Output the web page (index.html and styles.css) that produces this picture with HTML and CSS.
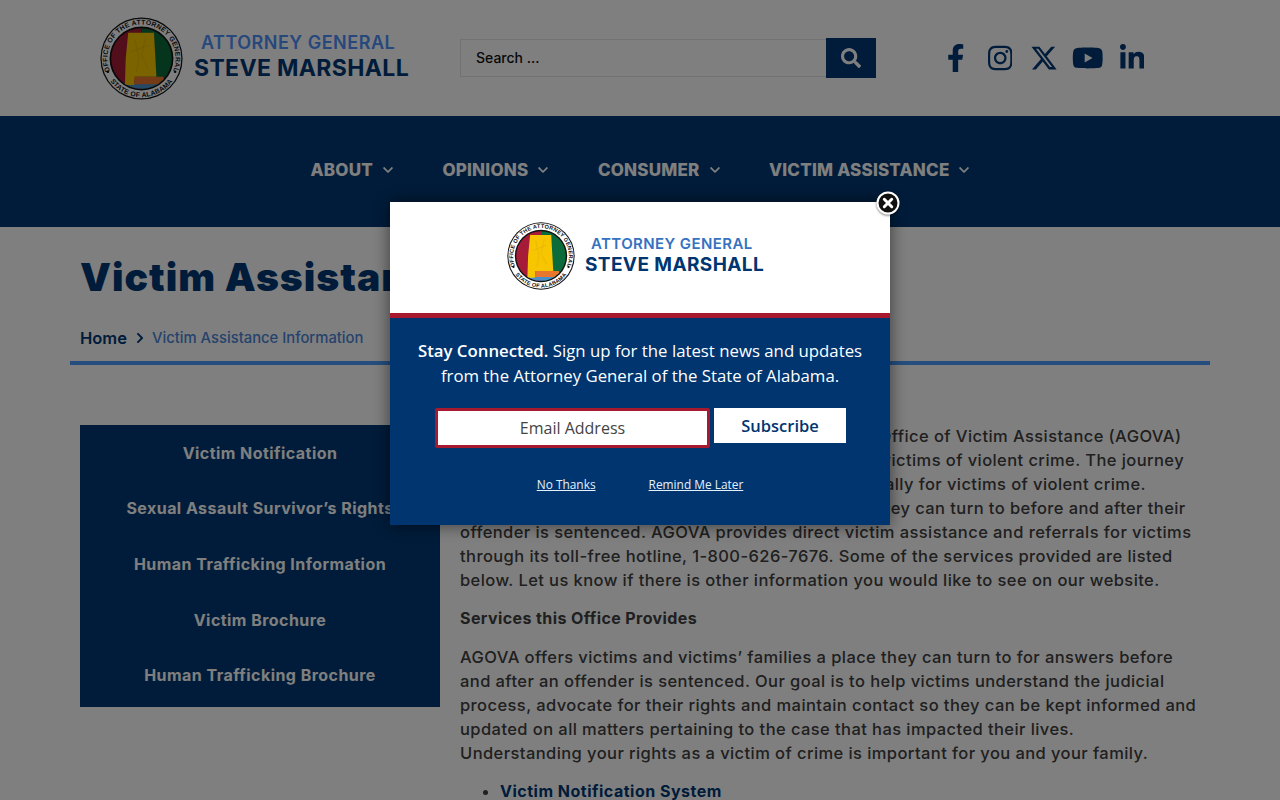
FILE: index.html
```html
<!DOCTYPE html>
<html lang="en">
<head>
    <meta charset="UTF-8">
    <meta name="viewport" content="width=device-width, initial-scale=1.0">
    <title>Victim Assistance Information</title>
    <link rel="stylesheet" href="styles.css">
</head>
<body>
    <svg class="sprite" width="0" height="0">
        <defs>
            <clipPath id="sealClip"><circle cx="50" cy="50" r="36.5"/></clipPath>
            <path id="sealTop" d="M 14.5 70.5 A 41 41 0 1 1 85.5 70.5"/>
            <path id="sealBottom" d="M 6.3 65.9 A 46.5 46.5 0 0 0 93.7 65.9"/>
            <symbol id="seal" viewBox="0 0 100 100">
                <circle cx="50" cy="50" r="49.5" fill="#111"/>
                <circle cx="50" cy="50" r="48" fill="#fff"/>
                <circle cx="50" cy="50" r="38.5" fill="#111"/>
                <g clip-path="url(#sealClip)">
                    <rect x="10" y="10" width="40" height="80" fill="#a61c38"/>
                    <rect x="50" y="10" width="40" height="80" fill="#0b6b3a"/>
                    <rect x="10" y="80" width="80" height="12" fill="#4a90c8"/>
                    <path d="M34 19 H65 L68 72 H42 L41 82 H30 L31 50 Z" fill="#f7c600"/>
                    <path d="M42 72 H76 L80 81 H41 Z" fill="#e8762c"/>
                    <path d="M42 27 L47 50 L44 66 M55 25 L50 46 L58 62 M38 42 L58 34" fill="none" stroke="#d9a80c" stroke-width=".6"/>
                </g>
                <text class="seal-text"><textPath href="#sealTop" startOffset="50%" text-anchor="middle">OFFICE OF THE ATTORNEY GENERAL</textPath></text>
                <text class="seal-text"><textPath href="#sealBottom" startOffset="50%" text-anchor="middle">STATE OF ALABAMA</textPath></text>
                <circle cx="9.5" cy="66" r="1.6" fill="#111"/>
                <circle cx="90.5" cy="66" r="1.6" fill="#111"/>
            </symbol>
            <symbol id="chevDown" viewBox="0 0 448 512"><path d="M207.029 381.476L12.686 187.132c-9.373-9.373-9.373-24.569 0-33.941l22.667-22.667c9.357-9.357 24.522-9.375 33.901-.04L224 284.505l154.745-154.021c9.379-9.335 24.544-9.317 33.901.04l22.667 22.667c9.373 9.373 9.373 24.569 0 33.941L240.971 381.476c-9.373 9.372-24.569 9.372-33.942 0z"/></symbol>
        </defs>
    </svg>

    <header class="top-bar">
        <a class="logo" href="#">
            <svg class="logo-seal"><use href="#seal"/></svg>
            <span class="logo-text">
                <span class="logo-title">ATTORNEY GENERAL</span>
                <span class="logo-name">STEVE MARSHALL</span>
            </span>
        </a>
        <form class="search">
            <input class="search-input" type="text" placeholder="Search ...">
            <button class="search-button" type="button" aria-label="Search">
                <svg viewBox="0 0 512 512"><path d="M505 442.7L405.3 343c-4.5-4.5-10.6-7-17-7H372c27.6-35.3 44-79.7 44-128C416 93.1 322.9 0 208 0S0 93.1 0 208s93.1 208 208 208c48.3 0 92.7-16.4 128-44v16.3c0 6.4 2.5 12.5 7 17l99.7 99.7c9.4 9.4 24.6 9.4 33.9 0l28.3-28.3c9.4-9.4 9.4-24.6.1-34zM208 336c-70.7 0-128-57.2-128-128 0-70.7 57.2-128 128-128 70.7 0 128 57.2 128 128 0 70.7-57.2 128-128 128z"/></svg>
            </button>
        </form>
        <div class="social">
            <a href="#" aria-label="Facebook"><svg viewBox="0 0 320 512"><path d="M279.14 288l14.22-92.66h-88.91v-60.13c0-25.35 12.42-50.06 52.24-50.06h40.42V6.26S260.43 0 225.36 0c-73.22 0-121.08 44.38-121.08 124.72v70.62H22.89V288h81.39v224h100.17V288z"/></svg></a>
            <a href="#" aria-label="Instagram"><svg viewBox="0 0 448 512"><path d="M224.1 141c-63.6 0-114.9 51.3-114.9 114.9s51.3 114.9 114.9 114.9S339 319.5 339 255.9 287.7 141 224.1 141zm0 189.6c-41.1 0-74.7-33.5-74.7-74.7s33.5-74.7 74.7-74.7 74.7 33.5 74.7 74.7-33.6 74.7-74.7 74.7zm146.4-194.3c0 14.9-12 26.8-26.8 26.8-14.9 0-26.8-12-26.8-26.8s12-26.8 26.8-26.8 26.8 12 26.8 26.8zm76.1 27.2c-1.7-35.9-9.9-67.7-36.2-93.9-26.2-26.2-58-34.4-93.9-36.2-37-2.1-147.9-2.1-184.9 0-35.8 1.7-67.6 9.9-93.9 36.1s-34.4 58-36.2 93.9c-2.1 37-2.1 147.9 0 184.9 1.7 35.9 9.9 67.7 36.2 93.9s58 34.4 93.9 36.2c37 2.1 147.9 2.1 184.9 0 35.9-1.7 67.7-9.9 93.9-36.2 26.2-26.2 34.4-58 36.2-93.9 2.1-37 2.1-147.8 0-184.8zM398.8 388c-7.8 19.6-22.9 34.7-42.6 42.6-29.5 11.7-99.5 9-132.1 9s-102.7 2.6-132.1-9c-19.6-7.8-34.7-22.9-42.6-42.6-11.7-29.5-9-99.5-9-132.1s-2.6-102.7 9-132.1c7.8-19.6 22.9-34.7 42.6-42.6 29.5-11.7 99.5-9 132.1-9s102.7-2.6 132.1 9c19.6 7.8 34.7 22.9 42.6 42.6 11.7 29.5 9 99.5 9 132.1s2.7 102.7-9 132.1z"/></svg></a>
            <a href="#" aria-label="X"><svg viewBox="0 0 512 512"><path d="M389.2 48h70.6L305.6 224.2 487 464H345L233.7 318.6 106.5 464H35.8L200.7 275.5 26.8 48H172.4L272.9 180.9 389.2 48zM364.4 421.8h39.1L151.1 88h-42L364.4 421.8z"/></svg></a>
            <a href="#" aria-label="YouTube"><svg viewBox="0 0 576 512"><path d="M549.655 124.083c-6.281-23.65-24.787-42.276-48.284-48.597C458.781 64 288 64 288 64S117.22 64 74.629 75.486c-23.497 6.322-42.003 24.947-48.284 48.597-11.412 42.867-11.412 132.305-11.412 132.305s0 89.438 11.412 132.305c6.281 23.65 24.787 41.5 48.284 47.821C117.22 448 288 448 288 448s170.78 0 213.371-11.486c23.497-6.321 42.003-24.171 48.284-47.821 11.412-42.867 11.412-132.305 11.412-132.305s0-89.438-11.412-132.305zm-317.51 213.508V175.185l142.739 81.205-142.739 81.201z"/></svg></a>
            <a href="#" aria-label="LinkedIn"><svg viewBox="0 0 448 512"><path d="M100.28 448H7.4V148.9h92.88zM53.79 108.1C24.09 108.1 0 83.5 0 53.8a53.79 53.79 0 0 1 107.58 0c0 29.7-24.1 54.3-53.79 54.3zM447.9 448h-92.68V302.4c0-34.7-.7-79.2-48.29-79.2-48.29 0-55.69 37.7-55.69 76.7V448h-92.78V148.9h89.08v40.8h1.3c12.4-23.5 42.69-48.3 87.88-48.3 94 0 111.28 61.9 111.28 142.3V448z"/></svg></a>
        </div>
    </header>

    <nav class="main-nav">
        <a href="#">ABOUT <svg class="chev"><use href="#chevDown"/></svg></a>
        <a href="#">OPINIONS <svg class="chev"><use href="#chevDown"/></svg></a>
        <a href="#">CONSUMER <svg class="chev"><use href="#chevDown"/></svg></a>
        <a href="#">VICTIM ASSISTANCE <svg class="chev"><use href="#chevDown"/></svg></a>
    </nav>

    <div class="page-head">
        <h1 class="page-title">Victim Assistance Information</h1>
        <div class="breadcrumb">
            <a href="#">Home</a>
            <svg class="crumb-sep" viewBox="0 0 320 512"><path d="M285.476 272.971L91.132 467.314c-9.373 9.373-24.569 9.373-33.941 0l-22.667-22.667c-9.357-9.357-9.375-24.522-.04-33.901L188.505 256 34.484 101.255c-9.335-9.379-9.317-24.544.04-33.901l22.667-22.667c9.373-9.373 24.569-9.373 33.941 0L285.475 239.03c9.373 9.372 9.373 24.568.001 33.941z"/></svg>
            <span>Victim Assistance Information</span>
        </div>
    </div>

    <div class="content">
        <aside class="side-menu">
            <a href="#">Victim Notification</a>
            <a href="#">Sexual Assault Survivor’s Rights</a>
            <a href="#">Human Trafficking Information</a>
            <a href="#">Victim Brochure</a>
            <a href="#">Human Trafficking Brochure</a>
        </aside>
        <main class="article">
            <p>Welcome to the web site of the Attorney General’s Office of Victim Assistance (AGOVA)<br>
            which is dedicated to assisting and supporting the victims of violent crime. The journey<br>
            through the criminal system can be difficult, especially for victims of violent crime.<br>
            AGOVA gives victims and family a place of refuge they can turn to before and after their<br>
            offender is sentenced. AGOVA provides direct victim assistance and referrals for victims<br>
            through its toll-free hotline, 1-800-626-7676. Some of the services provided are listed<br>
            below. Let us know if there is other information you would like to see on our website.</p>
            <p class="sub-head"><strong>Services this Office Provides</strong></p>
            <p>AGOVA offers victims and victims’ families a place they can turn to for answers before<br>
            and after an offender is sentenced. Our goal is to help victims understand the judicial<br>
            process, advocate for their rights and maintain contact so they can be kept informed and<br>
            updated on all matters pertaining to the case that has impacted their lives.<br>
            Understanding your rights as a victim of crime is important for you and your family.</p>
            <ul>
                <li><a href="#">Victim Notification System</a></li>
            </ul>
        </main>
    </div>

    <div class="overlay">
        <div class="popup">
            <button class="popup-close" type="button" aria-label="Close">
                <svg viewBox="0 0 24 24"><circle cx="12" cy="12" r="10.5" fill="#111" stroke="#fff" stroke-width="2"/><path d="M8.3 8.3 L15.7 15.7 M15.7 8.3 L8.3 15.7" stroke="#fff" stroke-width="3" stroke-linecap="round"/></svg>
            </button>
            <div class="popup-logo">
                <svg class="popup-seal"><use href="#seal"/></svg>
                <span class="popup-logo-text">
                    <span class="popup-title">ATTORNEY GENERAL</span>
                    <span class="popup-name">STEVE MARSHALL</span>
                </span>
            </div>
            <div class="popup-body">
                <p class="popup-copy"><strong>Stay Connected.</strong> Sign up for the latest news and updates<br>from the Attorney General of the State of Alabama.</p>
                <form class="subscribe">
                    <input class="email-input" type="text" placeholder="Email Address">
                    <button class="subscribe-button" type="button">Subscribe</button>
                </form>
                <div class="popup-links">
                    <a href="#">No Thanks</a>
                    <a href="#">Remind Me Later</a>
                </div>
            </div>
        </div>
    </div>
</body>
</html>
```

FILE: styles.css
```css
html, body {
    height: 100%;
    overflow: hidden;
}
body {
    margin: 0;
    background: #fff;
    font-family: Inter, "Liberation Sans", sans-serif;
    font-size: 16px;
    color: #404040;
}
a {
    text-decoration: none;
    color: inherit;
}
.sprite {
    position: absolute;
}
.seal-text {
    font-family: "Liberation Sans", sans-serif;
    font-size: 8.2px;
    font-weight: 700;
    letter-spacing: .3px;
    fill: #111;
}

/* header */
.top-bar {
    display: flex;
    align-items: center;
    height: 116px;
    padding-left: 100px;
}
.logo {
    display: flex;
    align-items: center;
    width: 360px;
}
.logo-seal {
    width: 83px;
    height: 83px;
    flex: none;
}
.logo-text {
    display: flex;
    flex-direction: column;
    margin-left: 11px;
    font-weight: 600;
}
.logo-title {
    padding-left: 7px;
    font-size: 18px;
    line-height: 20px;
    letter-spacing: .5px;
    color: #4c90fa;
}
.logo-name {
    font-size: 23px;
    font-weight: 700;
    line-height: 30px;
    letter-spacing: .35px;
    color: #003874;
}
.search {
    display: flex;
    align-items: center;
    width: 416px;
}
.search-input {
    flex: 1;
    min-width: 0;
    height: 38px;
    box-sizing: border-box;
    padding: 0 15px 2px;
    border: 1px solid #e4e4e4;
    border-right: 0;
    background: #fff;
    font: 500 14px Inter, sans-serif;
}
.search-input::placeholder {
    color: #111;
    opacity: 1;
}
.search-button {
    display: flex;
    align-items: center;
    justify-content: center;
    width: 50px;
    height: 40px;
    padding: 0;
    border: 0;
    background: #003874;
}
.search-button svg {
    width: 20px;
    height: 20px;
    fill: #fff;
}
.social {
    display: flex;
    margin-left: 58px;
}
.social a {
    display: flex;
    justify-content: center;
    width: 44px;
}
.social svg {
    height: 28px;
    fill: #003874;
}

/* main nav */
.main-nav {
    display: flex;
    justify-content: center;
    align-items: center;
    gap: 49.5px;
    height: 111px;
    padding-bottom: 3px;
    box-sizing: border-box;
    background: #003874;
}
.main-nav a {
    display: flex;
    align-items: center;
    gap: 10px;
    font-size: 17px;
    font-weight: 800;
    letter-spacing: .2px;
    color: #fff;
}
.chev {
    width: 10px;
    height: 12px;
    fill: #fff;
}

/* title block */
.page-head {
    margin: 0 70px;
    padding: 0 10px 11px;
    border-bottom: 4px solid #4a9cff;
}
.page-title {
    margin: 0;
    padding-top: 25px;
    font-size: 39px;
    line-height: 50px;
    font-weight: 900;
    letter-spacing: 1px;
    white-space: nowrap;
    color: #003874;
}
.breadcrumb {
    display: flex;
    align-items: center;
    margin-top: 24px;
    height: 24px;
    font-size: 14.8px;
    font-weight: 500;
    color: #4a86d8;
}
.breadcrumb a {
    font-size: 16.5px;
    font-weight: 600;
    color: #003874;
}
.crumb-sep {
    width: 8px;
    height: 12px;
    margin: 0 8px 0 9px;
    fill: #003874;
}

/* content row */
.content {
    display: flex;
    gap: 20px;
    padding: 60px 80px 0;
}
.side-menu {
    flex: none;
    display: flex;
    flex-direction: column;
    width: 360px;
    height: 282px;
    box-sizing: border-box;
    padding-bottom: 4px;
    background: #003874;
}
.side-menu a {
    flex: 1;
    display: flex;
    align-items: center;
    justify-content: center;
    font-size: 16px;
    font-weight: 700;
    letter-spacing: .45px;
    white-space: nowrap;
    color: #fff;
}
.article {
    flex: 1;
    margin-top: -1px;
    font-size: 16.5px;
    font-weight: 500;
    line-height: 24px;
    letter-spacing: .42px;
}
.article p {
    margin: 0 0 14px;
    white-space: nowrap;
}
.article .sub-head {
    margin-bottom: 15px;
}
.article strong {
    font-size: 16px;
    font-weight: 700;
    letter-spacing: .4px;
}
.article ul {
    margin: 0;
    padding-left: 40px;
}
.article li a {
    font-size: 16px;
    font-weight: 700;
    letter-spacing: .5px;
    color: #003874;
}

/* newsletter popup */
.overlay {
    position: fixed;
    inset: 0;
    display: flex;
    justify-content: center;
    align-items: flex-start;
    padding-top: 202px;
    background: rgba(0, 0, 0, .5);
}
.popup {
    position: relative;
    width: 500px;
    box-shadow: 0 0 16px rgba(0, 0, 0, .55);
}
.popup-close {
    position: absolute;
    top: -11px;
    right: -10px;
    width: 24px;
    height: 24px;
    padding: 0;
    border: 0;
    background: none;
    filter: drop-shadow(0 1px 1px rgba(0, 0, 0, .5));
}
.popup-logo {
    display: flex;
    align-items: center;
    height: 111px;
    padding: 0 0 3px 117px;
    box-sizing: border-box;
    background: #fff;
}
.popup-seal {
    width: 68px;
    height: 68px;
    flex: none;
}
.popup-logo-text {
    display: flex;
    flex-direction: column;
    margin-left: 10px;
    font-weight: 600;
}
.popup-title {
    padding-left: 6px;
    font-size: 15px;
    line-height: 18px;
    letter-spacing: .4px;
    color: #3572c0;
}
.popup-name {
    font-size: 19px;
    font-weight: 700;
    line-height: 24px;
    letter-spacing: .4px;
    color: #003570;
}
.popup-body {
    height: 212px;
    box-sizing: border-box;
    padding-top: 20px;
    border-top: 5px solid #a6192e;
    background: #003570;
    font-family: "Open Sans", sans-serif;
    color: #fff;
    text-align: center;
}
.popup-copy {
    margin: 0;
    font-size: 16.8px;
    line-height: 25px;
}
.popup-copy strong {
    font-weight: 600;
}
.subscribe {
    display: flex;
    align-items: flex-start;
    gap: 4px;
    margin: 20px 0 0 45px;
}
.email-input {
    width: 275px;
    height: 40px;
    box-sizing: border-box;
    border: 3px solid #a6192e;
    border-radius: 2px;
    background: #fff;
    text-align: center;
    font: 400 16px "Open Sans", sans-serif;
}
.email-input::placeholder {
    color: #444;
    opacity: 1;
}
.subscribe-button {
    width: 132px;
    height: 35px;
    padding: 0;
    border: 0;
    background: #fff;
    font: 600 16.5px "Open Sans", sans-serif;
    color: #003570;
}
.popup-links {
    display: flex;
    justify-content: center;
    gap: 53px;
    margin: 27px 0 0 0;
    font-size: 11.9px;
    line-height: 18px;
}
.popup-links a {
    text-decoration: underline;
    color: #e4f1fb;
}
```
